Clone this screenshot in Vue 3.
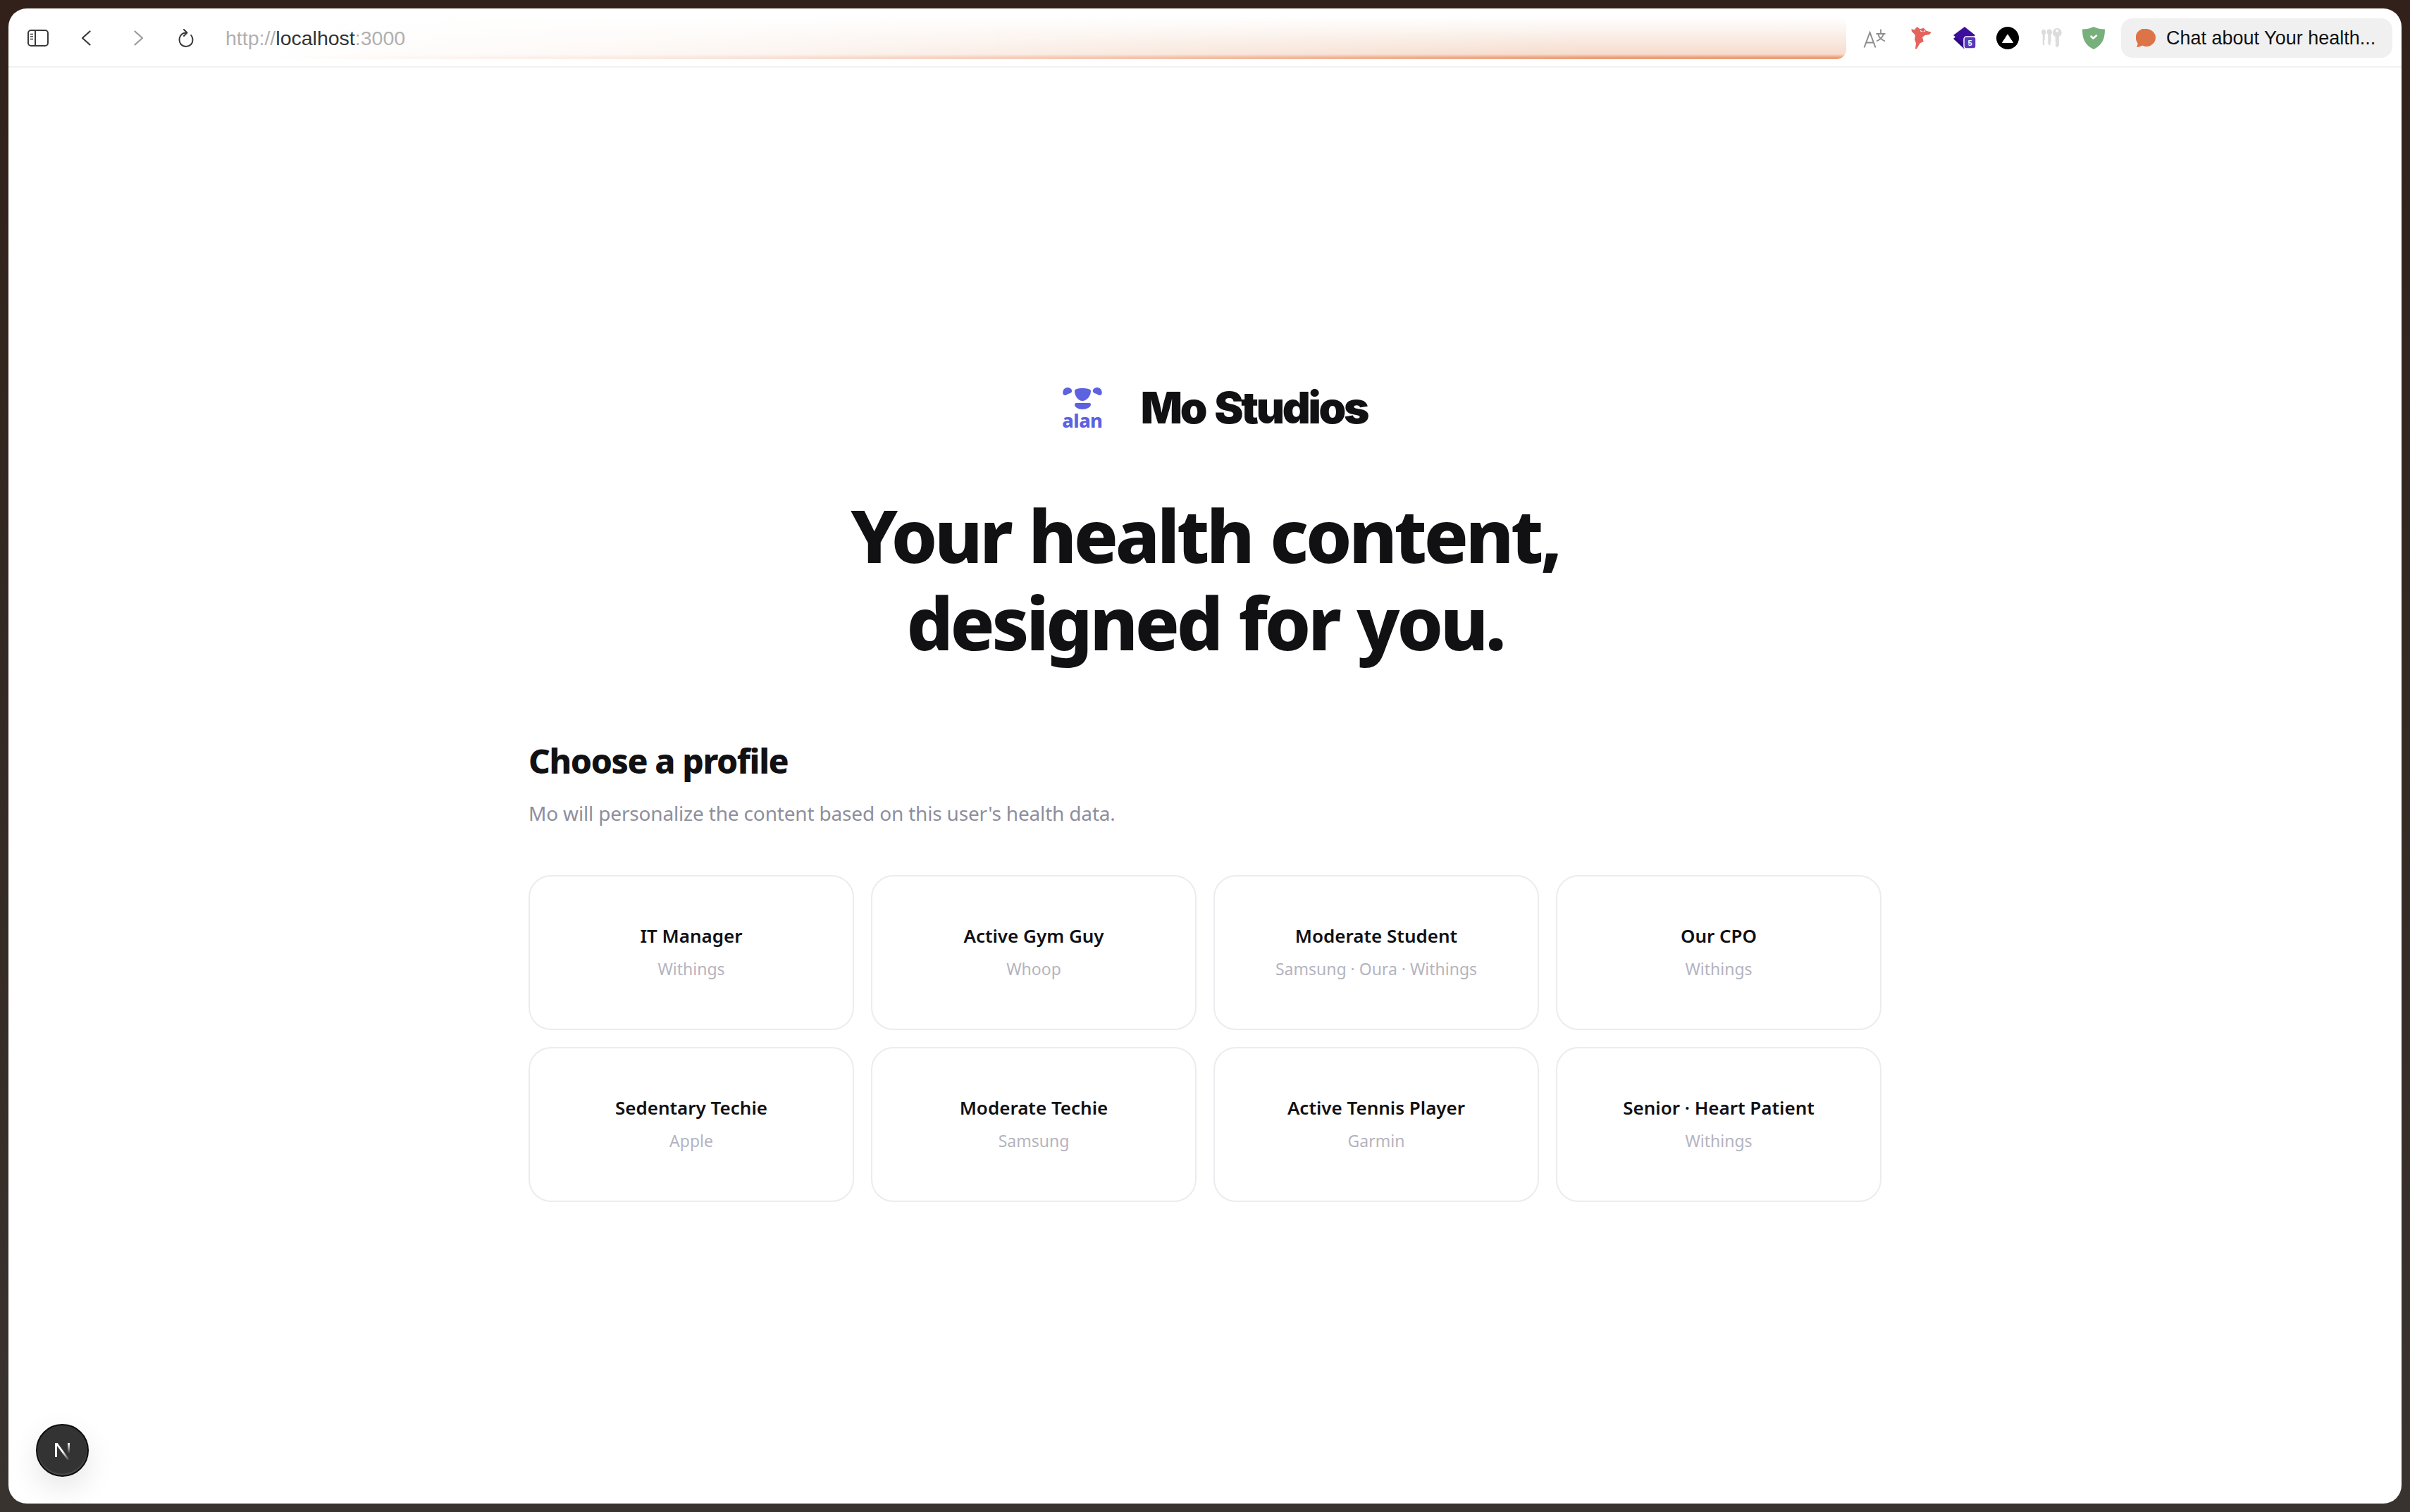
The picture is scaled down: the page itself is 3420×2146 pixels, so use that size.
<script setup>
const profiles = [
  { name: 'IT Manager', source: 'Withings' },
  { name: 'Active Gym Guy', source: 'Whoop' },
  { name: 'Moderate Student', source: 'Samsung · Oura · Withings' },
  { name: 'Our CPO', source: 'Withings' },
  { name: 'Sedentary Techie', source: 'Apple' },
  { name: 'Moderate Techie', source: 'Samsung' },
  { name: 'Active Tennis Player', source: 'Garmin' },
  { name: 'Senior · Heart Patient', source: 'Withings' },
]
</script>

<template>
  <div class="desktop">
    <div class="window">
      <header class="toolbar">
        <svg class="tool sidebar-icon" viewBox="0 0 30 24" fill="none" stroke="#3a3a3a" stroke-width="2">
          <rect x="1" y="1" width="28" height="22" rx="4" />
          <path d="M11 1v22" />
          <path d="M4 6.5h4M4 10h4M4 13.5h4" stroke-width="1.6" />
        </svg>
        <svg class="tool chevron" viewBox="0 0 14 22" fill="none" stroke="#3a3a3a" stroke-width="2.2" stroke-linecap="round" stroke-linejoin="round">
          <path d="M12.5 1.5 2 11l10.5 9.5" />
        </svg>
        <svg class="tool chevron forward" viewBox="0 0 14 22" fill="none" stroke="#9a9a9a" stroke-width="2.2" stroke-linecap="round" stroke-linejoin="round">
          <path d="M1.5 1.5 12 11 1.5 20.5" />
        </svg>
        <svg class="tool reload" viewBox="0 0 22 26" fill="none" stroke="#3a3a3a" stroke-width="2" stroke-linecap="round" stroke-linejoin="round">
          <path d="M11 5.500C5.500 5.500 1.500 10 1.500 15.500S5.500 25 11 25s9.500-4 9.500-9.500c0-2.500-.8-4.500-2.300-6.500" />
          <path d="M8 1l4.500 4.500L8 10" />
        </svg>
        <div class="url-bar">
          <span class="url-dim">http://</span><span class="url-host">localhost</span><span class="url-dim">:3000</span>
        </div>
        <div class="extensions">
          <svg class="ext translate" viewBox="0 0 32 28" fill="none" stroke="#8c8c8c" stroke-width="2">
            <path d="M1.500 27.500 9.500 6l8 21.500M4.500 20.500h10" />
            <path d="M18.500 8h13M25 1.500V8M21 8c1 4 4.500 8 10 10.500M29 8c-1 4-4.500 8-10 10.500" stroke-width="1.800" />
          </svg>
          <svg class="ext" viewBox="0 0 30 32">
            <path d="M8.300 0l4.400 3.300 5-1.600 4 4 7 2L26 11l-6.700 1.300L16 15l1.700 6-5 2.300L7.700 31.700 6 31l1-7.700-2-5 1-6.600L1 6.700.3 3.300 5 4.300z" fill="#e5625d" />
            <path d="M13 5.500l3 1.500M18 7l2-1.500" stroke="#fff" stroke-width="1.200" />
          </svg>
          <svg class="ext" viewBox="0 0 32 32">
            <path d="M0 17 15 31 30 17 15 4z" fill="#2a0a80" />
            <path d="M16 0 31 12 16 25 0 12z" fill="#3d0d9e" />
            <rect x="15" y="14" width="17" height="17" rx="3.500" fill="#5a37bd" stroke="#fff" stroke-width="1.500" />
            <text x="23.500" y="27" text-anchor="middle" class="ext-count">5</text>
          </svg>
          <svg class="ext" viewBox="0 0 32 32">
            <circle cx="16" cy="16" r="16" fill="#000" />
            <path d="M16 11 23.500 22.500H8.500z" fill="#fff" stroke="#fff" stroke-linejoin="round" />
          </svg>
          <svg class="ext" viewBox="0 0 31 29">
            <g fill="#dcdcdc" stroke="#fff" stroke-width="1">
              <path d="M5 2a4.500 4.500 0 0 1 3 8v7l-1 1.500 1 1.500-1 1.500 1 1.500-2 3-2-3V10a5 5 0 0 1 1-8z" />
              <path d="M13 1.500a5 5 0 0 1 3.500 8.500v9l-1 1.500 1 1.500-2.500 4-2.500-4V10A5 5 0 0 1 13 1.500z" />
              <path d="M24.500 .5a6.500 6.500 0 0 1 3 12.300V25l-3 3.500-3-3.500v-2l1-1.500-1-1.500v-7.200A6.500 6.500 0 0 1 24.500.5z" />
            </g>
            <circle cx="24.500" cy="4.500" r="1.800" fill="#fff" />
          </svg>
          <svg class="ext" viewBox="0 0 32 32">
            <path d="M16 0c5 2.500 10 3.500 16 3.500 0 13-3 22-16 28.500C3 25.500 0 16.500 0 3.500 6 3.500 11 2.500 16 0z" fill="#78b07c" />
            <path d="M12.500 13.500l3 3 4.500-4" fill="none" stroke="#fff" stroke-width="2.500" stroke-linecap="round" stroke-linejoin="round" />
          </svg>
        </div>
        <div class="chat-tab">
          <svg class="chat-icon" viewBox="0 0 28 26">
            <path d="M15 0a13 12.500 0 0 1 0 25c-2.500 0-4.500-.6-6-1.500-2 1.500-5 2.500-8 2.500 1-1.500 1.600-3.500 1.500-6A12.500 12.500 0 0 1 15 0z" fill="#dd7448" />
          </svg>
          <span>Chat about Your health...</span>
        </div>
      </header>

      <main class="page">
        <div class="brand">
          <div class="logo">
            <svg class="logo-mark" viewBox="0 0 56 32" fill="#5c62e0">
              <path d="M1 10C-1 7 1 0 7 0c4 0 7 3 6 6-1 2-3 2-5 3-3 2-5 3-7 1z" />
              <path d="M55 10c2-3 0-10-6-10-4 0-7 3-6 6 1 2 3 2 5 3 3 2 5 3 7 1z" />
              <path d="M17 5c0-3 5-4 11-4s12 1 12 4c0 7-6 14-12 14S17 12 17 5z" />
              <path d="M17 24c0-2 2-2 4-2h15c2 0 4 0 4 2 0 4-6 7-12 7s-11-3-11-7z" />
            </svg>
            <span class="logo-word">alan</span>
          </div>
          <span class="brand-name">Mo Studios</span>
        </div>

        <h1 class="headline">Your health content,<br />designed for you.</h1>

        <section class="profiles">
          <h2>Choose a profile</h2>
          <p class="intro">Mo will personalize the content based on this user's health data.</p>
          <div class="grid">
            <button v-for="profile in profiles" :key="profile.name" class="card">
              <span class="card-name">{{ profile.name }}</span>
              <span class="card-source">{{ profile.source }}</span>
            </button>
          </div>
        </section>
      </main>

      <div class="next-badge">
        <svg viewBox="0 0 32 32" width="32" height="32">
          <defs>
            <linearGradient id="n-a" x1="0" y1="0" x2="1" y2="1">
              <stop offset="0.5" stop-color="#fff" />
              <stop offset="1" stop-color="#fff" stop-opacity="0" />
            </linearGradient>
            <linearGradient id="n-b" x1="0" y1="0" x2="0" y2="1">
              <stop offset="0" stop-color="#fff" />
              <stop offset="1" stop-color="#fff" stop-opacity="0" />
            </linearGradient>
          </defs>
          <rect x="5" y="5" width="3" height="20" fill="#fff" />
          <path d="M5 5h3.500L26 29h-3.500z" fill="url(#n-a)" />
          <rect x="23" y="5" width="3" height="15" fill="url(#n-b)" />
        </svg>
      </div>
    </div>
  </div>
</template>

<style>
html,
body {
  margin: 0;
  background: #31211a;
}
</style>

<style scoped>
.desktop {
  height: 2146px;
  box-sizing: border-box;
  padding: 12px;
  background: linear-gradient(180deg, #31211a 0%, #39332f 100%);
}
.window {
  position: relative;
  height: 100%;
  background: #fff;
  border-radius: 26px;
  display: flex;
  flex-direction: column;
  overflow: hidden;
}
.toolbar {
  height: 84px;
  box-sizing: border-box;
  flex: none;
  display: flex;
  align-items: center;
  padding: 2px 13px 0 27px;
  border-bottom: 2px solid #f1f1f1;
}
.tool {
  flex: none;
  display: block;
}
.sidebar-icon {
  width: 30px;
  height: 24px;
}
.chevron {
  width: 14px;
  height: 22px;
  margin-left: 46px;
}
.chevron.forward {
  margin-left: 61px;
}
.reload {
  width: 22px;
  height: 26px;
  margin-left: 49px;
}
.url-bar {
  flex: 1;
  height: 60px;
  box-sizing: border-box;
  margin-left: 15px;
  padding-left: 30px;
  display: flex;
  align-items: center;
  font-family: "Liberation Sans", sans-serif;
  font-size: 28.5px;
  border-radius: 0 14px 14px 0;
  background:
    linear-gradient(90deg, #fff 4%, rgba(255, 255, 255, 0.75) 30%, rgba(255, 255, 255, 0) 85%),
    linear-gradient(180deg, #fff 0%, #fbf2ec 35%, #f6dccd 88%, #ec9e78 96%, #ec9e78 100%);
}
.url-dim {
  color: #b0b0b0;
}
.url-host {
  color: #333;
}
.extensions {
  flex: none;
  display: flex;
  align-items: center;
  gap: 29px;
  margin-left: 24px;
}
.ext {
  width: 32px;
  height: 32px;
  display: block;
}
.ext-count {
  font-family: "Liberation Sans", sans-serif;
  font-size: 11px;
  font-weight: 700;
  fill: #fff;
}
.translate {
  margin-right: 6px;
}
.chat-tab {
  flex: none;
  width: 385px;
  height: 56px;
  box-sizing: border-box;
  margin-left: 23px;
  padding-left: 21px;
  display: flex;
  align-items: center;
  gap: 15px;
  background: #f0f0f0;
  border-radius: 16px;
  font-family: "Liberation Sans", sans-serif;
  font-size: 27px;
  color: #111;
  white-space: nowrap;
}
.chat-icon {
  width: 28px;
  height: 26px;
  flex: none;
}
.page {
  flex: 1;
  display: flex;
  flex-direction: column;
  align-items: center;
  padding-top: 446px;
  color: #111114;
  font-family: "Noto Sans", sans-serif;
}
.brand {
  display: flex;
  align-items: center;
  gap: 55px;
  height: 74px;
  margin-left: 28px;
}
.logo {
  width: 56px;
  display: flex;
  flex-direction: column;
  align-items: center;
}
.logo-mark {
  width: 56px;
  height: 32px;
  display: block;
}
.logo-word {
  margin-top: 4px;
  font-size: 27px;
  line-height: 22px;
  font-weight: 800;
  color: #5c62e0;
  letter-spacing: -0.5px;
}
.brand-name {
  font-family: "Inter", sans-serif;
  font-size: 62px;
  line-height: 74px;
  font-weight: 900;
  letter-spacing: -3.3px;
  word-spacing: 4px;
}
.headline {
  margin: 81px 0 0;
  font-size: 104px;
  line-height: 124px;
  font-weight: 800;
  letter-spacing: -4.2px;
  word-spacing: 3px;
  text-align: center;
}
.profiles {
  width: 1920px;
  margin-top: 105px;
}
.profiles h2 {
  margin: 0;
  font-size: 48px;
  line-height: 60px;
  font-weight: 800;
  letter-spacing: -1.4px;
}
.intro {
  margin: 22px 0 0;
  font-size: 28px;
  line-height: 44px;
  letter-spacing: -0.17px;
  color: #8e8e9c;
}
.grid {
  display: grid;
  grid-template-columns: repeat(4, 1fr);
  gap: 24px;
  margin-top: 66px;
}
.card {
  height: 220px;
  box-sizing: border-box;
  padding: 0 0 4px;
  display: flex;
  flex-direction: column;
  align-items: center;
  justify-content: center;
  gap: 13px;
  background: #fff;
  border: 2px solid #ececf0;
  border-radius: 32px;
  font-family: inherit;
}
.card-name {
  font-size: 26px;
  line-height: 36px;
  font-weight: 600;
  color: #111114;
}
.card-source {
  font-size: 23px;
  line-height: 32px;
  color: #b4b4c0;
}
.next-badge {
  position: absolute;
  left: 39px;
  bottom: 38px;
  width: 75px;
  height: 75px;
  box-sizing: border-box;
  display: flex;
  align-items: center;
  justify-content: center;
  background: #333;
  border: 2px solid #0d0d0d;
  border-radius: 50%;
  box-shadow: inset 0 -2px 2px rgba(255, 255, 255, 0.14), 0 16px 40px rgba(0, 0, 0, 0.1);
}
</style>
